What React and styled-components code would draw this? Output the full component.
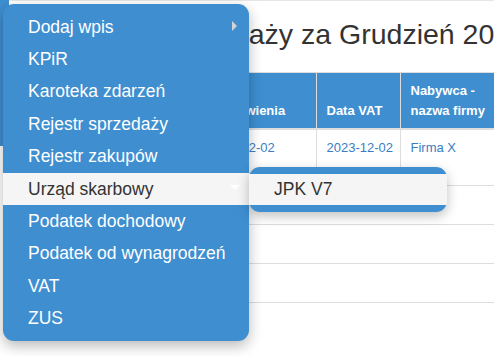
import React from 'react';
import styled, { createGlobalStyle } from 'styled-components';

const BLUE = '#3e8ed0';

const GlobalStyle = createGlobalStyle`
  html, body {
    margin: 0;
    padding: 0;
    background: #fff;
    overflow: hidden;
    font-family: 'Liberation Sans', Arial, sans-serif;
  }
`;

const menuItems = [
  { label: 'Dodaj wpis', caret: 'right' },
  { label: 'KPiR' },
  { label: 'Karoteka zdarzeń' },
  { label: 'Rejestr sprzedaży' },
  { label: 'Rejestr zakupów' },
  { label: 'Urząd skarbowy', caret: 'down', active: true, sub: ['JPK V7'] },
  { label: 'Podatek dochodowy' },
  { label: 'Podatek od wynagrodzeń' },
  { label: 'VAT' },
  { label: 'ZUS' },
];

export default function App() {
  return (
    <>
      <GlobalStyle />
      <Page>
        <SideTab />
        <Main>
          <Title>Rejestr sprzedaży za Grudzień 2023</Title>
          <Table>
            <colgroup>
              <col style={{ width: 98 }} />
              <col style={{ width: 149 }} />
              <col style={{ width: 84 }} />
              <col style={{ width: 170 }} />
              <col style={{ width: 130 }} />
            </colgroup>
            <thead>
              <tr>
                <Th>Nr faktury</Th>
                <Th>Data wystawienia</Th>
                <Th>Data VAT</Th>
                <Th>
                  Nabywca -<br />
                  nazwa firmy
                </Th>
                <Th>NIP</Th>
              </tr>
            </thead>
            <tbody>
              <tr>
                <Td>
                  <Link>FV 1/12/2023</Link>
                </Td>
                <Td $align='center'>
                  <Link>2023-12-02</Link>
                </Td>
                <Td>
                  <Link>2023-12-02</Link>
                </Td>
                <Td>
                  <Link>Firma X</Link>
                </Td>
                <Td>
                  <Link>1234567890</Link>
                </Td>
              </tr>
              {[0, 1, 2].map(i => (
                <tr key={i}>
                  <EmptyCell colSpan={5} />
                </tr>
              ))}
            </tbody>
          </Table>
        </Main>

        <Menu>
          {menuItems.map(item => (
            <MenuItem key={item.label} $active={item.active}>
              <span>{item.label}</span>
              {item.caret && <Caret $dir={item.caret} />}
              {item.sub && (
                <SubMenu>
                  {item.sub.map(s => (
                    <SubItem key={s}>{s}</SubItem>
                  ))}
                </SubMenu>
              )}
            </MenuItem>
          ))}
        </Menu>
      </Page>
    </>
  );
}

const Page = styled.div`
  position: relative;
  display: flex;
  width: 494px;
  height: 356px;
  overflow: hidden;
`;

const SideTab = styled.div`
  flex: 0 0 9px;
  height: 146px;
  background: ${BLUE};
`;

const Main = styled.div`
  flex: 1;
  min-width: 0;
  border-top: 1px solid #e6e6e6;
  padding-left: 60px;
`;

const Title = styled.h1`
  margin: 17px 0 22px -4px;
  font-size: 28.5px;
  font-weight: normal;
  line-height: 32px;
  color: #333;
  white-space: nowrap;
`;

const Table = styled.table`
  table-layout: fixed;
  width: 631px;
  border-collapse: collapse;
  border-top: 1px solid #ddd;
  font-size: 13px;
  line-height: 20px;
`;

const Th = styled.th`
  background: ${BLUE};
  color: #fff;
  font-weight: bold;
  text-align: left;
  vertical-align: bottom;
  padding: 8px 10px 7px;
  border-left: 1px solid #ddd;
  border-bottom: 2px solid #ddd;

  &:first-child {
    border-left: none;
  }
`;

const Td = styled.td`
  height: 40px;
  padding: 8px 10px 7px;
  vertical-align: top;
  text-align: ${props => props.$align || 'left'};
  border-left: 1px solid #ddd;
  border-bottom: 1px solid #ddd;
  white-space: nowrap;
  overflow: hidden;

  &:first-child {
    border-left: none;
  }
`;

const EmptyCell = styled.td`
  height: 38px;
  padding: 0;
  border-bottom: 1px solid #ddd;
`;

const Link = styled.a`
  color: #3a7dc4;
  text-decoration: none;
`;

const Menu = styled.ul`
  position: absolute;
  top: 4px;
  left: 3px;
  z-index: 10;
  width: 246px;
  margin: 0;
  padding: 7px 0 6px;
  list-style: none;
  background: ${BLUE};
  border-radius: 11px;
  box-shadow: 0 5px 14px rgba(0, 0, 0, 0.28);
`;

const MenuItem = styled.li`
  position: relative;
  display: flex;
  align-items: center;
  height: 32.4px;
  padding: 0 12px 0 25px;
  font-size: 17.5px;
  color: ${props => (props.$active ? '#333' : '#fff')};
  background: ${props => (props.$active ? '#f5f5f5' : 'transparent')};
  white-space: nowrap;

  & > span {
    flex: 1;
  }
`;

const Caret = styled.i`
  width: 0;
  height: 0;
  border-style: solid;
  ${props =>
    props.$dir === 'right'
      ? `
    border-width: 5.5px 0 5.5px 5px;
    border-color: transparent transparent transparent #d4d4d4;
    margin-top: -2px;
  `
      : `
    border-width: 5px 5px 0 5px;
    border-color: #fff transparent transparent transparent;
    margin-right: -3px;
    margin-top: -3px;
  `}
`;

const SubMenu = styled.ul`
  position: absolute;
  top: -6px;
  left: 100%;
  width: 198px;
  margin: 0;
  padding: 7px 0;
  list-style: none;
  background: ${BLUE};
  border-radius: 11px;
  box-shadow: 0 4px 12px rgba(0, 0, 0, 0.25);
`;

const SubItem = styled.li`
  display: flex;
  align-items: center;
  height: 31px;
  padding-left: 25px;
  font-size: 17.5px;
  color: #333;
  background: #f5f5f5;
`;
